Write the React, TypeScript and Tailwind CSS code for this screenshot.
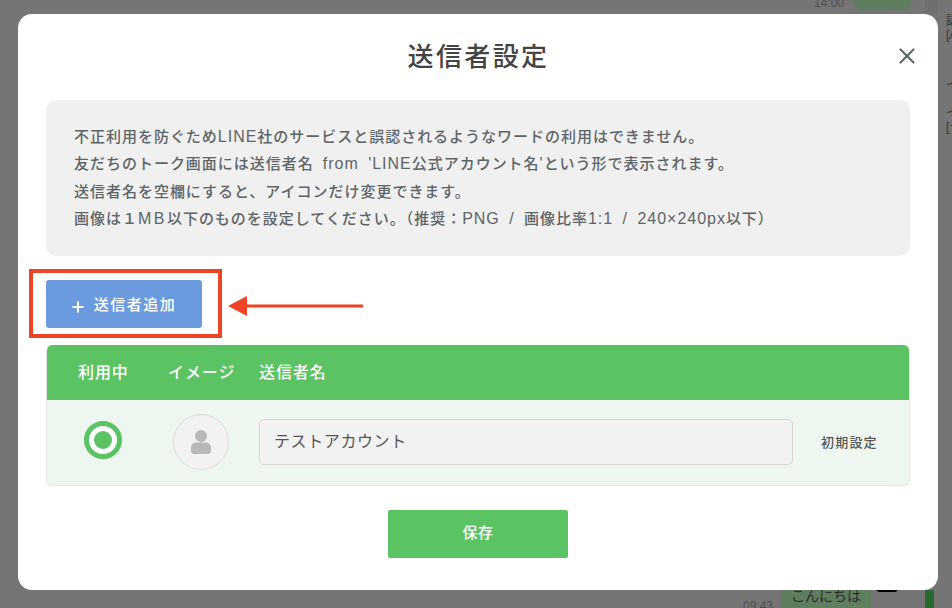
import React from "react";
import { X } from "lucide-react";

const jp = "font-['Liberation_Sans','Noto_Sans_CJK_JP',sans-serif]";
const latin = "text-[16px]";

// Dimmed chat screen peeking out around the modal
function Backdrop() {
  return (
    <div className="absolute inset-0 overflow-hidden bg-[#757575]">
      <div className="absolute left-[925px] top-0 h-[14px] w-[13px] bg-[#6f6f6f]" />
      <span className="absolute left-[814px] top-[-5px] text-[12px] leading-[16px] text-[#4f4f4f]">14:00</span>
      <div className="absolute left-[852px] top-[-20px] h-[30px] w-[61px] rounded-[12px] bg-[#5f7d5f]" />
      <div className="absolute left-[946px] top-[14px] text-[12px] leading-[14px] text-[#333]">
        <div>認</div>
        <div>[A</div>
        <div className="mt-[36px]">イ</div>
        <div className="mt-[14px]">イ</div>
        <div>[テ</div>
      </div>
      <span className="absolute left-[743px] top-[598px] text-[12px] leading-[16px] text-[#4f4f4f]">09:43</span>
      <div className="absolute left-[781px] top-[580px] flex h-[44px] w-[90px] justify-center rounded-[12px] bg-[#5f7d5f] pt-[6px] text-[14px] leading-[20px] text-[#2c2c2c]">こんにちは</div>
      <div className="absolute left-[876px] top-[584px] h-[8px] w-[22px] rounded-[4px] bg-black" />
      <div className="absolute left-[925px] top-[590px] h-[18px] w-[9px] bg-[#2a6a30]" />
    </div>
  );
}

function AddSenderButton() {
  return (
    <div className="relative h-[48px] w-[156px]">
      <button className="flex h-full w-full items-center justify-center gap-[10px] rounded-[3px] bg-[#6c9ade] pt-[3px] text-[15px] font-medium text-white">
        <svg width="12" height="12" viewBox="0 0 12 12" className="mt-[2px]">
          <path d="M6 0.5v11M0.5 6h11" stroke="#fff" strokeWidth="2" />
        </svg>
        <span className="tracking-[1.5px]">送信者追加</span>
      </button>
      {/* red annotation frame and arrow */}
      <div className="absolute left-[-17px] top-[-11px] h-[69px] w-[193px] border-4 border-[#ee4324]" />
      <svg width="135" height="22" viewBox="0 0 135 22" className="absolute left-[182px] top-[15px]">
        <path d="M0 11 L19 1 V9.5 H135 V12.5 H19 V21 Z" fill="#ee4324" />
      </svg>
    </div>
  );
}

function PersonIcon() {
  return (
    <svg width="20" height="24" viewBox="0 0 20 24">
      <circle cx="10" cy="6" r="6" fill="#b8b8b8" />
      <path d="M0 17.5C0 14 3 12.5 5 12.5h10c2 0 5 1.5 5 5V21c0 1.7-1.3 3-3 3H3c-1.7 0-3-1.3-3-3z" fill="#b8b8b8" />
    </svg>
  );
}

function SenderTable() {
  return (
    <div className="overflow-hidden rounded-[6px] border border-t-0 border-[#e4e8e5] bg-[#edf7f0]">
      <div className="flex h-[55px] items-center bg-[#5bc364] text-[16px] font-medium tracking-[0.9px] text-white">
        <div className="w-[121px] pl-[31px]">利用中</div>
        <div className="w-[91px]">イメージ</div>
        <div>送信者名</div>
      </div>
      <div className="flex h-[85px] items-center pb-[2px]">
        <div className="flex w-[112px] justify-center">
          <div className="mt-[-3px] flex h-[38px] w-[38px] items-center justify-center rounded-full border-[5px] border-[#5bc364] bg-white">
            <div className="h-[18px] w-[18px] rounded-full bg-[#5bc364]" />
          </div>
        </div>
        <div className="w-[100px] pl-[14px]">
          <div className="flex h-[56px] w-[56px] items-center justify-center rounded-full border border-[#dcdcdc] bg-[#f2f2f2]">
            <PersonIcon />
          </div>
        </div>
        <div className="flex h-[46px] w-[534px] items-center rounded-[5px] border border-[#d6d6d6] bg-[#f2f2f2] px-[14px] text-[16px] tracking-[0.6px] text-[#555]">
          テストアカウント
        </div>
        <div className="ml-[28px] mt-[2px] text-[13px] font-medium tracking-[1.2px] text-[#555]">初期設定</div>
      </div>
    </div>
  );
}

export default function App() {
  return (
    <div className={`relative h-[608px] w-[952px] overflow-hidden ${jp}`}>
      <Backdrop />
      <div className="relative ml-[18px] flex h-[576px] w-[920px] translate-y-[14px] flex-col rounded-[14px] bg-white px-[28px]">
        <div className="relative flex h-[86px] items-center justify-center">
          <h1 className="ml-[1px] text-[26px] font-medium tracking-[2.4px] text-[#444]">送信者設定</h1>
          <X size={26} strokeWidth={2} className="absolute right-[-10px] top-[29px] text-[#5e6a6e]" />
        </div>
        <div className="h-[156px] rounded-[10px] bg-[#f0f0f0] px-[28px] pt-[23px] text-[15px] font-medium leading-[27.3px] tracking-[0.98px] text-[#5d6567] [word-spacing:4px]">
          <p>不正利用を防ぐため<span className={latin}>LINE</span>社のサービスと誤認されるようなワードの利用はできません。</p>
          <p>友だちのトーク画面には送信者名 <span className={latin}>from 'LINE</span>公式アカウント名<span className={latin}>'</span>という形で表示されます。</p>
          <p>送信者名を空欄にすると、アイコンだけ変更できます。</p>
          <p>画像は１<span className="text-[16px] tracking-[2.5px]">MB</span>以下のものを設定してください。（推奨：<span className={latin}>PNG / </span>画像比率<span className={latin}>1:1 / 240×240px</span>以下）</p>
        </div>
        <div className="mt-[24px]">
          <AddSenderButton />
        </div>
        <div className="mt-[17px]">
          <SenderTable />
        </div>
        <button className="mx-auto mt-[24px] h-[48px] w-[180px] rounded-[2px] bg-[#5bc364] pb-[2px] text-[15px] font-medium tracking-[0.5px] text-white">保存</button>
      </div>
    </div>
  );
}
